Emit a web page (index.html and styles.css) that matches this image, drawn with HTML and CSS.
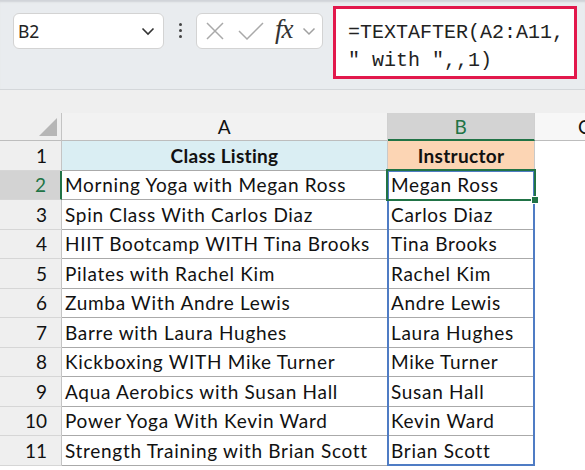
FILE: index.html
```html
<!DOCTYPE html>
<html lang="en">
<head>
    <meta charset="UTF-8">
    <title>TEXTAFTER</title>
    <link rel="stylesheet" href="styles.css">
</head>
<body>

    <div class="ribbon">
        <div class="name-box">
            <span>B2</span>
            <svg class="chev" width="14" height="9" viewBox="0 0 14 9"><path d="M1.5 1.5 L7 7 L12.5 1.5" fill="none" stroke="#333" stroke-width="1.6"/></svg>
        </div>
        <div class="dots"><i></i><i></i><i></i></div>
        <div class="fx-box">
            <svg width="20" height="20" viewBox="0 0 20 20"><path d="M2 2 L18 18 M18 2 L2 18" stroke="#a9a9a9" stroke-width="1.5" fill="none"/></svg>
            <svg width="26" height="20" viewBox="0 0 26 20"><path d="M1 10 L9 18 L25 2" stroke="#a9a9a9" stroke-width="1.5" fill="none"/></svg>
            <span class="fx">fx</span>
            <svg class="chev-sm" width="14" height="9" viewBox="0 0 14 9"><path d="M1.5 1.5 L7 7 L12.5 1.5" fill="none" stroke="#a0a0a0" stroke-width="1.5"/></svg>
        </div>
        <div class="formula">=TEXTAFTER(A2:A11,<br>" with ",,1)</div>
    </div>

    <div class="strip"></div>

    <div class="sheet">
        <div class="corner"><span class="tri"></span></div>
        <div class="col-head">A</div>
        <div class="col-head active">B</div>
        <div class="col-head rest"><span>C</span></div>

        <div class="row-head">1</div>
        <div class="cell title-a">Class Listing</div>
        <div class="cell title-b">Instructor</div>
        <div class="blank"></div>

        <div class="row-head active">2</div>
        <div class="cell">Morning Yoga with Megan Ross</div>
        <div class="cell">Megan Ross</div>
        <div class="blank"></div>

        <div class="row-head">3</div>
        <div class="cell">Spin Class With Carlos Diaz</div>
        <div class="cell">Carlos Diaz</div>
        <div class="blank"></div>

        <div class="row-head">4</div>
        <div class="cell">HIIT Bootcamp WITH Tina Brooks</div>
        <div class="cell">Tina Brooks</div>
        <div class="blank"></div>

        <div class="row-head">5</div>
        <div class="cell">Pilates with Rachel Kim</div>
        <div class="cell">Rachel Kim</div>
        <div class="blank"></div>

        <div class="row-head">6</div>
        <div class="cell">Zumba With Andre Lewis</div>
        <div class="cell">Andre Lewis</div>
        <div class="blank"></div>

        <div class="row-head">7</div>
        <div class="cell">Barre with Laura Hughes</div>
        <div class="cell">Laura Hughes</div>
        <div class="blank"></div>

        <div class="row-head">8</div>
        <div class="cell">Kickboxing WITH Mike Turner</div>
        <div class="cell">Mike Turner</div>
        <div class="blank"></div>

        <div class="row-head">9</div>
        <div class="cell">Aqua Aerobics with Susan Hall</div>
        <div class="cell">Susan Hall</div>
        <div class="blank"></div>

        <div class="row-head">10</div>
        <div class="cell">Power Yoga With Kevin Ward</div>
        <div class="cell">Kevin Ward</div>
        <div class="blank"></div>

        <div class="row-head">11</div>
        <div class="cell">Strength Training with Brian Scott</div>
        <div class="cell">Brian Scott</div>
        <div class="blank"></div>

        <!-- spill range + active cell -->
        <div class="spill"></div>
        <div class="selected"><span class="handle"></span></div>
    </div>

</body>
</html>
```

FILE: styles.css
```css
body {
    margin: 0;
    width: 585px;
    height: 470px;
    overflow: hidden;
    background-color: #fff;
    font-family: "Noto Sans", sans-serif;
}

/* formula bar */

.ribbon {
    height: 89px;
    background-color: #e9ecef;
    border-bottom: 1px solid #d4d7da;
    box-shadow: inset 0 3px 2px -1px #d0d3d7;
    display: flex;
    align-items: flex-start;
    padding-left: 13px;
}

.name-box {
    margin-top: 13px;
    width: 151px;
    height: 36px;
    box-sizing: border-box;
    background-color: #fff;
    border: 1px solid #d3d3d3;
    border-radius: 6px;
    display: flex;
    align-items: center;
    justify-content: space-between;
    padding: 0 8px 0 4px;
    font-size: 17.5px;
    color: #222;
}

.dots {
    margin-top: 23px;
    width: 32px;
    display: flex;
    flex-direction: column;
    align-items: center;
    gap: 3px;
}

.dots i {
    display: block;
    width: 3px;
    height: 3px;
    border-radius: 50%;
    background-color: #444;
}

.fx-box {
    margin-top: 13px;
    width: 127px;
    height: 36px;
    box-sizing: border-box;
    background-color: #fff;
    border: 1px solid #d3d3d3;
    border-radius: 6px;
    display: flex;
    align-items: center;
    padding-left: 8px;
}

.fx-box svg:nth-child(2) {
    margin-left: 13px;
}

.fx {
    font-family: "Liberation Serif", serif;
    font-style: italic;
    font-size: 27px;
    color: #333;
    margin-left: 11px;
    line-height: 1;
    padding-bottom: 4px;
    letter-spacing: -1px;
}

.chev-sm {
    margin-left: 9px;
}

.formula {
    margin: 6px 0 0 10px;
    width: 244px;
    height: 73px;
    box-sizing: border-box;
    background-color: #fff;
    border: 3px solid #e2184c;
    padding: 10px 0 0 12px;
    font-family: "Liberation Mono", monospace;
    font-size: 20px;
    line-height: 28px;
    color: #222;
    white-space: nowrap;
}

.strip {
    height: 23px;
    background-color: #efefef;
}

/* grid */

.sheet {
    position: relative;
    display: grid;
    grid-template-columns: 62px 326px 147px 50px;
    grid-template-rows: 28px repeat(11, 29.5px);
    font-family: Lato, sans-serif;
    font-size: 19px;
    letter-spacing: 0.7px;
    color: #111;
}

.corner {
    background-color: #efefef;
    border-right: 1px solid #c4c4c4;
    border-bottom: 1px solid #bdbdbd;
    position: relative;
}

.tri {
    position: absolute;
    right: 4px;
    bottom: 4px;
    width: 0;
    height: 0;
    border-left: 18px solid transparent;
    border-bottom: 18px solid #b6b6b6;
}

.col-head {
    background-color: #f2f2f2;
    border-right: 1px solid #d0d0d0;
    border-bottom: 1px solid #bdbdbd;
    display: flex;
    align-items: center;
    justify-content: center;
    color: #111;
}

.col-head.active {
    background-color: #d3d3d3;
    color: #217346;
    border-bottom: 2px solid #217346;
}

.col-head.rest {
    background-color: #f7f7f7;
    border-right: none;
    justify-content: flex-start;
    padding-left: 43px;
}

.row-head {
    background-color: #efefef;
    border-right: 1px solid #c4c4c4;
    border-bottom: 1px solid #d6d6d6;
    display: flex;
    align-items: center;
    justify-content: flex-end;
    padding-right: 14px;
    letter-spacing: 0;
}

.row-head.active {
    background-color: #d3d3d3;
    color: #217346;
    border-right: 2px solid #217346;
}

.cell {
    border-right: 1px solid #c9c9c9;
    border-bottom: 1px solid #aaaaaa;
    display: flex;
    align-items: center;
    padding-left: 3px;
    white-space: nowrap;
    overflow: hidden;
}

.title-a,
.title-b {
    font-weight: bold;
    justify-content: center;
    padding-left: 0;
    letter-spacing: 0.3px;
}

.title-a {
    background-color: #daeef3;
}

.title-b {
    background-color: #fcd5b4;
}

.blank {
    background-color: #fff;
}

.spill {
    position: absolute;
    left: 387px;
    top: 57px;
    width: 148px;
    height: 296px;
    border: 2px solid #4f7cc4;
    box-sizing: border-box;
}

.selected {
    position: absolute;
    left: 386px;
    top: 56px;
    width: 150px;
    height: 32px;
    border: 2px solid #217346;
    box-sizing: border-box;
}

.handle {
    position: absolute;
    right: -5px;
    bottom: -5px;
    width: 6px;
    height: 6px;
    background-color: #217346;
    border: 1px solid #fff;
}
```
